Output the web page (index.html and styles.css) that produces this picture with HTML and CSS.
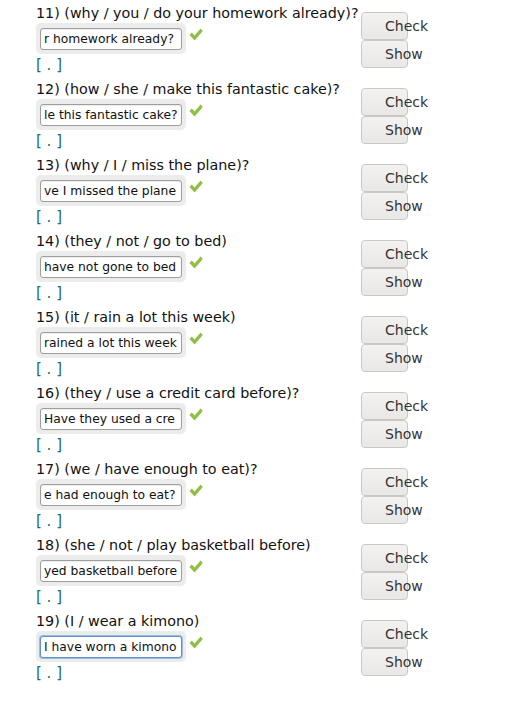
FILE: index.html
```html
<!DOCTYPE html>
<html>
<head>
<meta charset="utf-8">
<link rel="stylesheet" href="styles.css">
</head>
<body>
<div class="list">
  <div class="item">
    <div class="q">
      <div class="prompt">11) (why / you / do your homework already)?</div>
      <div class="answer"><span class="field"><input class="inp" type="text" value="r homework already?"></span><svg class="tick" viewBox="0 0 14 13"><path d="M0.5 7 L2.8 4.6 L5.6 7.4 L11.6 0.6 L13.8 2.9 L5.6 12.6 Z" fill="#8fc043"/></svg></div>
      <div class="hint">[ . ]</div>
    </div>
    <div class="btns"><button class="btn">Check</button><button class="btn">Show</button></div>
  </div>
  <div class="item">
    <div class="q">
      <div class="prompt">12) (how / she / make this fantastic cake)?</div>
      <div class="answer"><span class="field"><input class="inp" type="text" value="le this fantastic cake?"></span><svg class="tick" viewBox="0 0 14 13"><path d="M0.5 7 L2.8 4.6 L5.6 7.4 L11.6 0.6 L13.8 2.9 L5.6 12.6 Z" fill="#8fc043"/></svg></div>
      <div class="hint">[ . ]</div>
    </div>
    <div class="btns"><button class="btn">Check</button><button class="btn">Show</button></div>
  </div>
  <div class="item">
    <div class="q">
      <div class="prompt">13) (why / I / miss the plane)?</div>
      <div class="answer"><span class="field"><input class="inp" type="text" value="ve I missed the plane"></span><svg class="tick" viewBox="0 0 14 13"><path d="M0.5 7 L2.8 4.6 L5.6 7.4 L11.6 0.6 L13.8 2.9 L5.6 12.6 Z" fill="#8fc043"/></svg></div>
      <div class="hint">[ . ]</div>
    </div>
    <div class="btns"><button class="btn">Check</button><button class="btn">Show</button></div>
  </div>
  <div class="item">
    <div class="q">
      <div class="prompt">14) (they / not / go to bed)</div>
      <div class="answer"><span class="field"><input class="inp" type="text" value="have not gone to bed"></span><svg class="tick" viewBox="0 0 14 13"><path d="M0.5 7 L2.8 4.6 L5.6 7.4 L11.6 0.6 L13.8 2.9 L5.6 12.6 Z" fill="#8fc043"/></svg></div>
      <div class="hint">[ . ]</div>
    </div>
    <div class="btns"><button class="btn">Check</button><button class="btn">Show</button></div>
  </div>
  <div class="item">
    <div class="q">
      <div class="prompt">15) (it / rain a lot this week)</div>
      <div class="answer"><span class="field"><input class="inp" type="text" value="rained a lot this week"></span><svg class="tick" viewBox="0 0 14 13"><path d="M0.5 7 L2.8 4.6 L5.6 7.4 L11.6 0.6 L13.8 2.9 L5.6 12.6 Z" fill="#8fc043"/></svg></div>
      <div class="hint">[ . ]</div>
    </div>
    <div class="btns"><button class="btn">Check</button><button class="btn">Show</button></div>
  </div>
  <div class="item">
    <div class="q">
      <div class="prompt">16) (they / use a credit card before)?</div>
      <div class="answer"><span class="field"><input class="inp" type="text" value="Have they used a cre"></span><svg class="tick" viewBox="0 0 14 13"><path d="M0.5 7 L2.8 4.6 L5.6 7.4 L11.6 0.6 L13.8 2.9 L5.6 12.6 Z" fill="#8fc043"/></svg></div>
      <div class="hint">[ . ]</div>
    </div>
    <div class="btns"><button class="btn">Check</button><button class="btn">Show</button></div>
  </div>
  <div class="item">
    <div class="q">
      <div class="prompt">17) (we / have enough to eat)?</div>
      <div class="answer"><span class="field"><input class="inp" type="text" value="e had enough to eat?"></span><svg class="tick" viewBox="0 0 14 13"><path d="M0.5 7 L2.8 4.6 L5.6 7.4 L11.6 0.6 L13.8 2.9 L5.6 12.6 Z" fill="#8fc043"/></svg></div>
      <div class="hint">[ . ]</div>
    </div>
    <div class="btns"><button class="btn">Check</button><button class="btn">Show</button></div>
  </div>
  <div class="item">
    <div class="q">
      <div class="prompt">18) (she / not / play basketball before)</div>
      <div class="answer"><span class="field"><input class="inp" type="text" value="yed basketball before"></span><svg class="tick" viewBox="0 0 14 13"><path d="M0.5 7 L2.8 4.6 L5.6 7.4 L11.6 0.6 L13.8 2.9 L5.6 12.6 Z" fill="#8fc043"/></svg></div>
      <div class="hint">[ . ]</div>
    </div>
    <div class="btns"><button class="btn">Check</button><button class="btn">Show</button></div>
  </div>
  <div class="item">
    <div class="q">
      <div class="prompt">19) (I / wear a kimono)</div>
      <div class="answer"><span class="field"><input class="inp focus" type="text" value="I have worn a kimono"></span><svg class="tick" viewBox="0 0 14 13"><path d="M0.5 7 L2.8 4.6 L5.6 7.4 L11.6 0.6 L13.8 2.9 L5.6 12.6 Z" fill="#8fc043"/></svg></div>
      <div class="hint">[ . ]</div>
    </div>
    <div class="btns"><button class="btn">Check</button><button class="btn">Show</button></div>
  </div>
</div>
</body>
</html>
```
FILE: styles.css
```css
html, body {
  margin: 0;
  padding: 0;
  background: #ffffff;
}
body {
  font-family: "DejaVu Sans", sans-serif;
  color: #111;
}
.list {
  padding: 5px 0 0 36px;
}
.item {
  display: flex;
  align-items: center;
  padding-bottom: 7px;
}
.q {
  width: 325px;
  flex: none;
}
.prompt {
  font-size: 14.3px;
  line-height: 17px;
  height: 17px;
  white-space: nowrap;
}
.answer {
  display: flex;
  align-items: flex-start;
  margin-top: 1px;
}
.field {
  display: block;
  background: #ececec;
  border-radius: 5px;
  padding: 5px 4px 4px 4px;
}
.inp {
  display: block;
  box-sizing: border-box;
  width: 142px;
  height: 22px;
  margin: 0;
  padding: 0 3px;
  border: 1px solid #9e9e9e;
  border-radius: 3px;
  background: #fff;
  font-family: "DejaVu Sans", sans-serif;
  font-size: 12.3px;
  color: #111;
  outline: none;
  box-shadow: inset 0 1px 1px rgba(0,0,0,0.08);
}
.inp.focus {
  border-color: #5d93d2;
  box-shadow: 0 0 0 1px rgba(93,147,210,0.55);
}
.tick {
  width: 14px;
  height: 13px;
  margin: 5px 0 0 3px;
}
.hint {
  margin-top: 3px;
  font-size: 15px;
  line-height: 17px;
  height: 17px;
  color: #236b6b;
}
.btns {
  display: flex;
  flex-direction: column;
}
.btn {
  box-sizing: border-box;
  width: 47px;
  height: 28px;
  margin: 0;
  padding: 0 0 0 23px;
  text-align: left;
  white-space: nowrap;
  overflow: visible;
  font-family: "DejaVu Sans", sans-serif;
  font-size: 14px;
  color: #333;
  background: linear-gradient(#f3f2f1, #e9e8e6);
  border: 1px solid #cbc8c4;
  border-radius: 4px;
}
```
